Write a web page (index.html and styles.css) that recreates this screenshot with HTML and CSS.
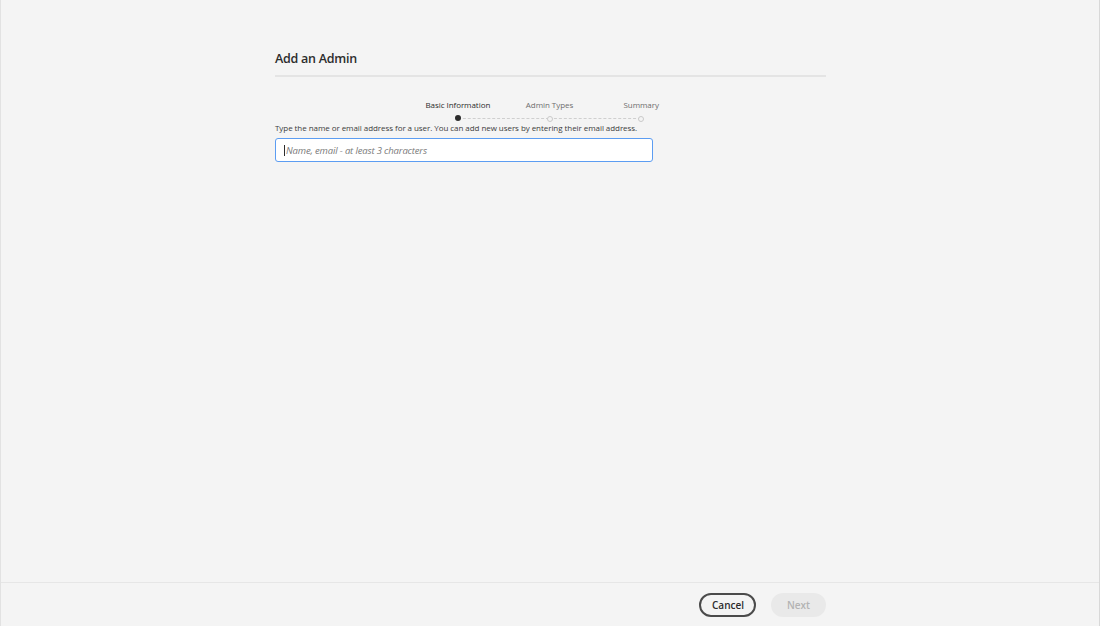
FILE: index.html
```html
<!DOCTYPE html>
<html lang="en">
<head>
    <meta charset="UTF-8">
    <title>Add an Admin</title>
    <link rel="stylesheet" href="styles.css">
</head>
<body>
    <div class="page">
        <div class="content">
            <div class="wizard">
                <h1 class="title">Add an Admin</h1>
                <div class="stepper">
                    <div class="step active">
                        <div class="step-label">Basic Information</div>
                        <div class="step-dot"></div>
                    </div>
                    <div class="step">
                        <div class="step-label">Admin Types</div>
                        <div class="step-dot"></div>
                    </div>
                    <div class="step">
                        <div class="step-label">Summary</div>
                        <div class="step-dot"></div>
                    </div>
                </div>
                <div class="hint">Type the name or email address for a user. You can add new users by entering their email address.</div>
                <div class="search-box">
                    <span class="caret"></span>
                    <input type="text" placeholder="Name, email - at least 3 characters">
                </div>
            </div>
        </div>
        <div class="footer">
            <div class="footer-inner">
                <button class="btn btn-cancel">Cancel</button>
                <button class="btn btn-next" disabled>Next</button>
            </div>
        </div>
    </div>
</body>
</html>
```

FILE: styles.css
```css
html, body {
    margin: 0;
    padding: 0;
    width: 100%;
    height: 100%;
    background-color: #f4f4f4;
    font-family: "Open Sans", "Noto Sans", sans-serif;
    color: #2c2c2c;
}

.page {
    height: 100%;
    display: flex;
    flex-direction: column;
    border-left: 1px solid #e2e2e2;
    border-right: 1px solid #d8d8d8;
    box-sizing: border-box;
}

.content {
    flex: 1;
    display: flex;
    justify-content: center;
}

.wizard {
    width: 551px;
    padding-top: 50px;
    margin-left: 1px;
}

.title {
    margin: 0;
    font-size: 12.5px;
    font-weight: 600;
    letter-spacing: -0.25px;
    color: #2c2c2c;
    padding-bottom: 8px;
    border-bottom: 2px solid #e4e4e4;
}

.stepper {
    display: flex;
    margin-top: 22px;
    margin-left: 137px;
    width: 275px;
}

.step {
    width: 92px;
    display: flex;
    flex-direction: column;
    align-items: center;
    position: relative;
}

.step-label {
    font-size: 8px;
    color: #6e6e6e;
    white-space: nowrap;
    letter-spacing: -0.05px;
}

.step.active .step-label {
    color: #2c2c2c;
}

.step-dot {
    margin-top: 6px;
    width: 4px;
    height: 4px;
    border-radius: 50%;
    border: 1px solid #cacaca;
    background: #f4f4f4;
    position: relative;
    z-index: 1;
}

.step.active .step-dot {
    width: 6px;
    height: 6px;
    margin-top: 5px;
    border: none;
    background: #2c2c2c;
}

.step + .step::before {
    content: "";
    position: absolute;
    left: -46px;
    right: 46px;
    bottom: 3px;
    border-top: 1px dashed #cfcfcf;
}

.hint {
    font-size: 8px;
    color: #3c3c3c;
    letter-spacing: -0.06px;
    margin-top: 0;
}

.search-box {
    margin-top: 5px;
    width: 378px;
    height: 24px;
    box-sizing: border-box;
    border: 1px solid #5c9df2;
    border-radius: 3px;
    background: #ffffff;
    display: flex;
    align-items: center;
    padding-left: 8px;
}

.caret {
    width: 1px;
    height: 11px;
    background: #2c2c2c;
}

.search-box input {
    border: none;
    outline: none;
    background: transparent;
    font-family: inherit;
    font-size: 9.5px;
    font-style: italic;
    padding: 0 0 0 1px;
    width: 100%;
    letter-spacing: -0.15px;
}

.search-box input::placeholder {
    color: #7a7a7a;
}

.footer {
    height: 43px;
    border-top: 1px solid #e6e6e6;
    display: flex;
    justify-content: center;
}

.footer-inner {
    width: 551px;
    margin-left: 1px;
    display: flex;
    justify-content: flex-end;
    align-items: center;
    gap: 15px;
    padding-top: 1px;
}

.btn {
    height: 24px;
    padding: 0 11px;
    border-radius: 12px;
    font-family: inherit;
    font-size: 10px;
    font-weight: 600;
    box-sizing: border-box;
}

.btn-cancel {
    width: 57px;
    border: 2px solid #4b4b4b;
    background: transparent;
    color: #2c2c2c;
}

.btn-next {
    width: 55px;
    border: none;
    background: #e9e9e9;
    color: #b3b3b3;
}
```
